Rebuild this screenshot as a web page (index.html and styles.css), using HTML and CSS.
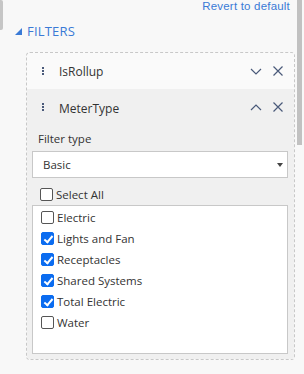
FILE: index.html
```html
<!DOCTYPE html>
<html>
<head>
<meta charset="utf-8">
<link rel="stylesheet" href="styles.css">
</head>
<body>
<div class="outer-thumb"></div>
<div class="pane">
  <div class="revert-row"><span class="revert">Revert to default</span></div>
  <div class="section-head">
    <svg class="tri" width="7" height="7" viewBox="0 0 7 7"><polygon points="7,0 7,7 0,7" fill="#3a7ad6"/></svg>
    <span class="section-title">FILTERS</span>
  </div>
  <div class="card">
    <div class="frow">
      <span class="grip"><i></i><i></i><i></i></span>
      <span class="fname">IsRollup</span>
      <svg class="chev" width="12" height="7" viewBox="0 0 12 7"><polyline points="1,1 6,6 11,1" fill="none" stroke="#4a5a7a" stroke-width="1.2"/></svg>
      <svg class="close" width="10" height="10" viewBox="0 0 10 10"><path d="M0.5 0.5 L9.5 9.5 M9.5 0.5 L0.5 9.5" stroke="#4a5a7a" stroke-width="1.2"/></svg>
    </div>
    <div class="expanded">
      <div class="frow">
        <span class="grip"><i></i><i></i><i></i></span>
        <span class="fname">MeterType</span>
        <svg class="chev" width="12" height="7" viewBox="0 0 12 7"><polyline points="1,6 6,1 11,6" fill="none" stroke="#4a5a7a" stroke-width="1.2"/></svg>
        <svg class="close" width="10" height="10" viewBox="0 0 10 10"><path d="M0.5 0.5 L9.5 9.5 M9.5 0.5 L0.5 9.5" stroke="#4a5a7a" stroke-width="1.2"/></svg>
      </div>
      <div class="body">
        <div class="label">Filter type</div>
        <div class="select"><span>Basic</span><span class="caret"></span></div>
        <label class="check all"><span class="box"></span>Select All</label>
        <div class="list">
          <label class="check"><span class="box"></span>Electric</label>
          <label class="check"><span class="box on"></span>Lights and Fan</label>
          <label class="check"><span class="box on"></span>Receptacles</label>
          <label class="check"><span class="box on"></span>Shared Systems</label>
          <label class="check"><span class="box on"></span>Total Electric</label>
          <label class="check"><span class="box"></span>Water</label>
        </div>
      </div>
    </div>
  </div>
</div>
<div class="scroll-thumb"></div>
</body>
</html>
```

FILE: styles.css
```css
html, body {
  margin: 0;
  padding: 0;
}
body {
  width: 304px;
  height: 374px;
  overflow: hidden;
  background: #f8f8f8;
  font-family: "Segoe UI", "Open Sans", "Noto Sans", sans-serif;
  color: #333;
  position: relative;
}
.outer-thumb {
  position: absolute;
  left: 0;
  top: 0;
  width: 3px;
  height: 30px;
  background: #c6c6c6;
  border-radius: 0 2px 2px 0;
}
.scroll-thumb {
  position: absolute;
  left: 297px;
  top: 0;
  width: 5px;
  height: 145px;
  background: #c1c1c1;
}
.pane {
  padding: 0 14px 0 15px;
}
.revert-row {
  display: flex;
  justify-content: flex-end;
  align-items: flex-start;
  height: 20px;
}
.revert {
  display: inline-block;
  font-family: "Liberation Sans", Arial, sans-serif;
  font-size: 11.5px;
  letter-spacing: 0.2px;
  line-height: 13px;
  color: #3a7ad6;
}
.section-head {
  display: flex;
  align-items: center;
  gap: 5px;
  height: 22px;
}
.tri {
  margin-top: 1px;
}
.section-title {
  font-size: 13px;
  color: #3a7ad6;
  letter-spacing: 0.2px;
}
.card {
  margin: 10px 0 0 11px;
  width: 267px;
  height: 306px;
  border: 1px dashed #c8c8c8;
  border-radius: 4px;
  background: #fafafa;
  overflow: hidden;
  display: flex;
  flex-direction: column;
}
.frow {
  display: flex;
  align-items: center;
  height: 36px;
  padding-left: 15px;
}
.grip {
  display: flex;
  flex-direction: column;
  gap: 1px;
  width: 2px;
  margin-right: 15px;
  margin-top: -1px;
}
.grip i {
  display: block;
  width: 2px;
  height: 2px;
  background: #4a5a7a;
}
.fname {
  font-size: 12px;
  color: #333;
  flex: 1;
}
.chev {
  margin-right: 11px;
}
.close {
  margin-right: 11px;
}
.expanded {
  flex: 1;
  background: #f0f0f0;
}
.expanded .frow .fname {
  margin-top: 2px;
}
.body {
  padding: 0 6px 0 5px;
}
.label {
  font-size: 11.5px;
  color: #333;
  height: 26px;
  line-height: 27px;
  padding-left: 6px;
}
.select {
  height: 25px;
  background: #fff;
  border: 1px solid #c8c8c8;
  display: flex;
  align-items: center;
  justify-content: space-between;
  padding: 0 4px 0 10px;
  font-size: 11.5px;
  color: #333;
}
.caret {
  width: 0;
  height: 0;
  border-left: 3.5px solid transparent;
  border-right: 3.5px solid transparent;
  border-top: 4px solid #444;
}
.check {
  display: flex;
  align-items: center;
  height: 21px;
  font-size: 11.5px;
  color: #333;
  padding-left: 8px;
}
.check .box {
  box-sizing: border-box;
  width: 13px;
  height: 13px;
  border: 1px solid #555;
  border-radius: 2px;
  margin-right: 3px;
  background: #fff;
  position: relative;
}
.check .box.on {
  background: #0b6cf0;
  border-color: #0b6cf0;
}
.check .box.on::after {
  content: "";
  position: absolute;
  left: 3.5px;
  top: 0.5px;
  width: 3px;
  height: 7px;
  border-right: 2px solid #fff;
  border-bottom: 2px solid #fff;
  transform: rotate(40deg);
}
.check.all {
  box-sizing: border-box;
  height: 27px;
  padding-top: 5px;
}
.list {
  height: 146px;
  background: #fff;
  border: 1px solid #c8c8c8;
  padding-top: 1px;
}
```
